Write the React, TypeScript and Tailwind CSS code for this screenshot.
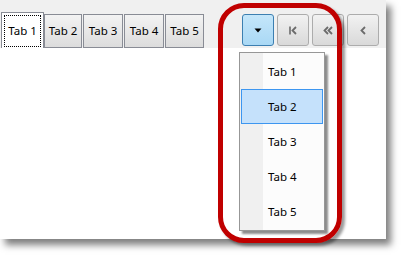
import React from 'react';

const font = { fontFamily: '"Segoe UI", "Noto Sans", "DejaVu Sans", sans-serif' };

const TabOverflow = () => {
  const tabs = [
    { label: 'Tab 2', width: 'w-[38px] ml-0' },
    { label: 'Tab 3', width: 'w-[40px] ml-[1px]' },
    { label: 'Tab 4', width: 'w-[40px] ml-[1px]' },
    { label: 'Tab 5', width: 'w-[39px] ml-[1px]' },
  ];
  const menu = ['Tab 1', 'Tab 2', 'Tab 3', 'Tab 4', 'Tab 5'];

  return (
    <div className="relative w-[402px] h-[255px] bg-white overflow-hidden text-[11.5px] text-black" style={font}>
      {/* panel */}
      <div className="w-[386px] h-[239px] bg-white shadow-[5px_6px_7px_rgba(0,0,0,0.5)]">
        <div className="flex items-end h-[48px] bg-[#f0f0f0]">
          <div className="flex items-end pl-[1px]">
            <div className="w-[43px] h-[36px] bg-white border border-b-0 border-[#898c95] p-[2px] pb-[1px]">
              <div className="h-full border border-dotted border-black flex items-center justify-center">Tab 1</div>
            </div>
            {tabs.map((t) => (
              <div
                key={t.label}
                className={`${t.width} h-[34px] border border-[#898c95] bg-gradient-to-b from-[#f3f3f3] to-[#dcdcdc] flex items-center justify-center`}
              >
                {t.label}
              </div>
            ))}
          </div>

          <div className="flex gap-[3px] ml-[38px] mb-[2px]">
            <button className="w-[32px] h-[32px] rounded-[3px] border border-[#3c7fb1] bg-gradient-to-b from-[#c4e6fa] to-[#a9d8f5] flex items-center justify-center">
              <svg width="8" height="5" viewBox="0 0 8 5">
                <path d="M0.5 0.5h7L4 4.5z" fill="#000" />
              </svg>
            </button>
            <button className="w-[32px] h-[32px] rounded-[3px] border border-[#acacac] bg-gradient-to-b from-[#f2f2f2] to-[#d9d9d9] flex items-center justify-center">
              <svg width="8" height="9" viewBox="0 0 8 9">
                <path d="M1 0.5v8" stroke="#6b6b6b" strokeWidth="1.6" />
                <path d="M7 1 3.5 4.5 7 8" stroke="#6b6b6b" strokeWidth="1.8" fill="none" />
              </svg>
            </button>
            <button className="w-[32px] h-[32px] rounded-[3px] border border-[#acacac] bg-gradient-to-b from-[#f2f2f2] to-[#d9d9d9] flex items-center justify-center">
              <svg width="10" height="9" viewBox="0 0 10 9">
                <path d="M5 1 1.5 4.5 5 8M9 1 5.5 4.5 9 8" stroke="#6b6b6b" strokeWidth="1.8" fill="none" />
              </svg>
            </button>
            <button className="w-[32px] h-[32px] rounded-[3px] border border-[#acacac] bg-gradient-to-b from-[#f2f2f2] to-[#d9d9d9] flex items-center justify-center">
              <svg width="6" height="9" viewBox="0 0 6 9">
                <path d="M5 1 1.5 4.5 5 8" stroke="#6b6b6b" strokeWidth="1.8" fill="none" />
              </svg>
            </button>
          </div>
        </div>
      </div>

      {/* overflow menu */}
      <div className="absolute left-[239px] top-[52px] w-[86px] h-[179px] border border-[#979797] bg-[#fcfcfc] shadow-[3px_3px_2px_rgba(0,0,0,0.45)] py-[1px]">
        <div className="absolute left-0 top-0 bottom-0 w-[23px] bg-[#f0f0f0]" />
        {menu.map((m) => (
          <div key={m} className="relative h-[35px] px-[1px]">
            <div
              className={`h-full flex items-center ${
                m === 'Tab 2' ? 'bg-[#c5e1fb] border border-[#3d96f0] pl-[26px]' : 'pl-[27px]'
              }`}
            >
              {m}
            </div>
          </div>
        ))}
      </div>

      {/* annotation */}
      <div className="absolute left-[218px] top-[3px] w-[124px] h-[240px] rounded-[26px] border-[5px] border-[#c00000] shadow-[3px_3px_3px_rgba(0,0,0,0.4)]" />
    </div>
  );
};

export default function App() {
  return <TabOverflow />;
}
